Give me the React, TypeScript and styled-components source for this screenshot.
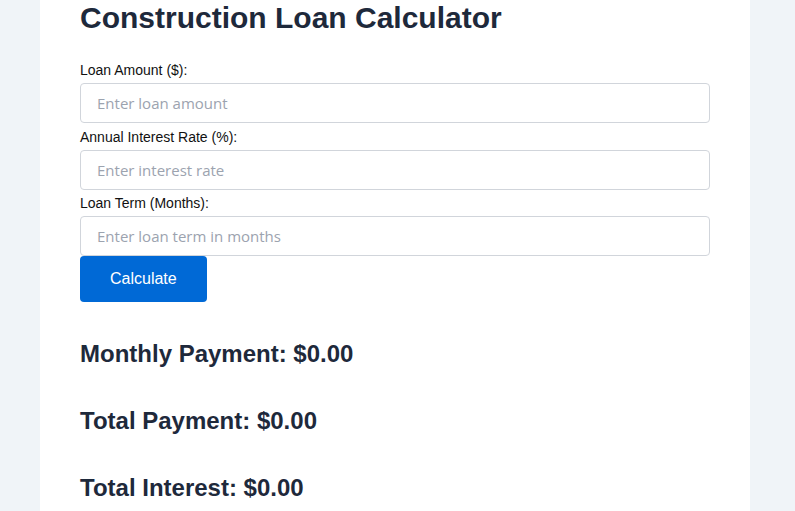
import styled, { createGlobalStyle } from "styled-components"

const GlobalStyle = createGlobalStyle`
    html, body {
        margin: 0;
        padding: 0;
        background-color: #f0f4f8;
        font-family: "Liberation Sans", Arial, sans-serif;
    }
`

const Page = styled.div`
    display: flex;
    min-height: 511px;
    overflow: hidden;
`
const Card = styled.main`
    width: 710px;
    margin-left: 40px;
    padding: 0 40px 20px;
    box-sizing: border-box;
    background-color: #ffffff;
`
const Title = styled.h1`
    margin: 0 0 27px;
    font-size: 30px;
    line-height: 35px;
    font-weight: 700;
    color: #1e293b;
`
const Form = styled.form`
    display: flex;
    flex-direction: column;
    align-items: flex-start;
`
const Field = styled.div`
    width: 100%;
    margin-bottom: 5.5px;
    &:last-of-type {
        margin-bottom: 0;
    }
`
const Label = styled.label`
    display: block;
    font-size: 14px;
    line-height: 16px;
    color: #111;
    margin-bottom: 5px;
`
const Input = styled.input`
    display: block;
    width: 100%;
    height: 40px;
    box-sizing: border-box;
    padding: 0 16px;
    border: 1px solid #d1d5db;
    border-radius: 4px;
    font-family: "Open Sans", sans-serif;
    font-size: 15px;
    color: #111;
    &::placeholder {
        color: #9ca3af;
    }
`
const Button = styled.button`
    height: 46px;
    padding: 0 30px;
    border: none;
    border-radius: 4px;
    background-color: #0069d6;
    color: #ffffff;
    font-family: "Liberation Sans", Arial, sans-serif;
    font-size: 16px;
    cursor: pointer;
`
const Results = styled.section`
    margin-top: 38px;
`
const Result = styled.h3`
    margin: 0 0 40px;
    font-size: 24px;
    line-height: 27px;
    font-weight: 700;
    color: #1e293b;
`

const fields = [
    { id: "amount", label: "Loan Amount ($):", placeholder: "Enter loan amount" },
    { id: "rate", label: "Annual Interest Rate (%):", placeholder: "Enter interest rate" },
    { id: "term", label: "Loan Term (Months):", placeholder: "Enter loan term in months" },
]

export default function App() {
    return (
        <>
            <GlobalStyle />
            <Page>
                <Card>
                    <Title>Construction Loan Calculator</Title>
                    <Form onSubmit={(e) => e.preventDefault()}>
                        {fields.map((f) => (
                            <Field key={f.id}>
                                <Label htmlFor={f.id}>{f.label}</Label>
                                <Input id={f.id} type="number" placeholder={f.placeholder} />
                            </Field>
                        ))}
                        <Button type="submit">Calculate</Button>
                    </Form>
                    <Results>
                        <Result>Monthly Payment: $0.00</Result>
                        <Result>Total Payment: $0.00</Result>
                        <Result>Total Interest: $0.00</Result>
                    </Results>
                </Card>
            </Page>
        </>
    )
}
